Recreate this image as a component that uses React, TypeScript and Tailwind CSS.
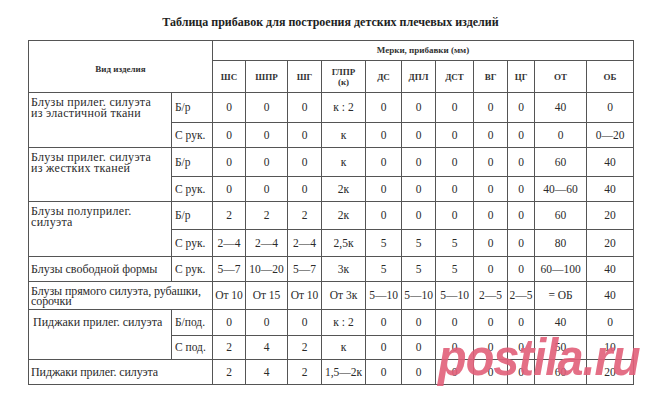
const measures = ["ШС", "ШПР", "ШГ", "ГЛПР", "ДС", "ДПЛ", "ДСТ", "ВГ", "ЦГ", "ОТ", "ОБ"];
const colWidths = [143, 41, 33, 42, 34, 44, 36, 34, 38, 34, 27, 52, 47];

type Row = {
  name?: string;
  nameSpan?: number;
  namePad?: string;
  full?: boolean;
  sub?: string;
  values: string[];
  h: string;
};

const rows: Row[] = [
  { name: "Блузы прилег. силуэта\nиз эластичной ткани", nameSpan: 2, namePad: "pt-[4px] tracking-[0.3px]", sub: "Б/р", values: ["0", "0", "0", "к : 2", "0", "0", "0", "0", "0", "40", "0"], h: "h-[30px]" },
  { sub: "С рук.", values: ["0", "0", "0", "к", "0", "0", "0", "0", "0", "0", "0—20"], h: "h-[25px]" },
  { name: "Блузы прилег. силуэта\nиз жестких тканей", nameSpan: 2, namePad: "pt-[4px] tracking-[0.3px]", sub: "Б/р", values: ["0", "0", "0", "к", "0", "0", "0", "0", "0", "60", "40"], h: "h-[29px]" },
  { sub: "С рук.", values: ["0", "0", "0", "2к", "0", "0", "0", "0", "0", "40—60", "40"], h: "h-[25px]" },
  { name: "Блузы полуприлег.\nсилуэта", nameSpan: 2, namePad: "pt-[4px] tracking-[0.3px]", sub: "Б/р", values: ["2", "2", "2", "2к", "0", "0", "0", "0", "0", "60", "20"], h: "h-[28px]" },
  { sub: "С рук.", values: ["2—4", "2—4", "2—4", "2,5к", "5", "5", "5", "0", "0", "80", "20"], h: "h-[27px]" },
  { name: "Блузы свободной формы", nameSpan: 1, sub: "С рук.", values: ["5—7", "10—20", "5—7", "3к", "5", "5", "5", "0", "0", "60—100", "40"], h: "h-[25px]" },
  { name: "Блузы прямого силуэта, рубашки,\nсорочки", full: true, values: ["От 10", "От 15", "От 10", "От 3к", "5—10", "5—10", "5—10", "2—5", "2—5", "= ОБ", "40"], h: "h-[28px]" },
  { name: "Пиджаки прилег. силуэта", nameSpan: 2, namePad: "pt-[7px] pl-[4px]", sub: "Б/под.", values: ["0", "0", "0", "к : 2", "0", "0", "0", "0", "0", "40", "0"], h: "h-[26px]" },
  { sub: "С под.", values: ["2", "4", "2", "к", "0", "0", "0", "0", "0", "50", "10"], h: "h-[24px]" },
  { name: "Пиджаки прилег. силуэта", full: true, values: ["2", "4", "2", "1,5—2к", "0", "0", "0", "0", "0", "60", "20"], h: "h-[25px]" },
];

const cell = "border border-[#555] p-0";

export default function App() {
  return (
    <div className="relative h-[407px] w-[660px] overflow-hidden bg-white font-['Liberation_Serif',serif] text-[#2b2b2b]">
      <div className="ml-[28px] w-[605px] pt-[15px]">
        <h1 className="mb-[10px] text-center text-[12px] font-bold leading-[15px] text-[#222]">
          Таблица прибавок для построения детских плечевых изделий
        </h1>
        <table className="w-[605px] table-fixed border-collapse border-[1.5px] border-[#555] text-[11.5px] leading-[11px]">
          <colgroup>
            {colWidths.map((w, i) => (
              <col key={i} style={{ width: w }} />
            ))}
          </colgroup>
          <thead className="text-[9px] font-bold text-[#333]">
            <tr className="h-[20px]">
              <th colSpan={2} rowSpan={2} className={`${cell} border-b-[1.5px] pt-[6px] text-center`}>
                Вид изделия
              </th>
              <th colSpan={11} className={`${cell} text-center`}>
                Мерки, прибавки (мм)
              </th>
            </tr>
            <tr className="h-[32px]">
              {measures.map((m) => (
                <th key={m} className={`${cell} border-b-[1.5px] text-center leading-[10px]`}>
                  {m === "ГЛПР" ? (
                    <>
                      ГЛПР
                      <br />
                      (к)
                    </>
                  ) : (
                    m
                  )}
                </th>
              ))}
            </tr>
          </thead>
          <tbody>
            {rows.map((r, i) => (
              <tr key={i} className={r.h}>
                {r.full && (
                  <td colSpan={2} className={`${cell} whitespace-pre-line pl-[2px] text-left text-[12px] leading-[10px] tracking-[-0.1px]`}>
                    {r.name}
                  </td>
                )}
                {!r.full && r.name && (
                  <td
                    rowSpan={r.nameSpan}
                    className={`${cell} ${r.nameSpan === 2 ? `align-top ${r.namePad}` : ""} whitespace-pre-line pl-[2px] text-left text-[12px] leading-[11px]`}
                  >
                    {r.name}
                  </td>
                )}
                {r.sub && <td className={`${cell} pl-[3px] text-left`}>{r.sub}</td>}
                {r.values.map((v, j) => (
                  <td key={j} className={`${cell} whitespace-nowrap text-center`}>
                    {v}
                  </td>
                ))}
              </tr>
            ))}
          </tbody>
        </table>
      </div>
      <div className="pointer-events-none absolute left-[438px] top-[331px] origin-left scale-x-[0.9] font-['Liberation_Sans',sans-serif] text-[52px] font-bold italic leading-none tracking-[-1px] text-[#e2607a] opacity-90">
        postila.ru
      </div>
    </div>
  );
}
